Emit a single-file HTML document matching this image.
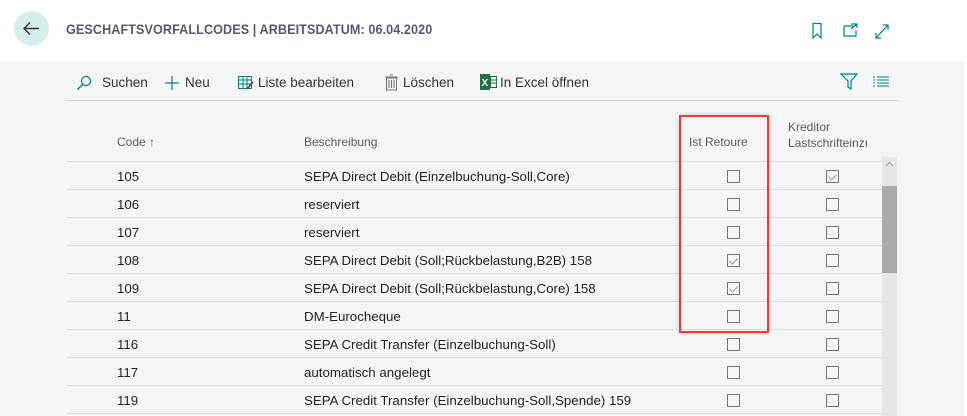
<!DOCTYPE html>
<html><head><meta charset="utf-8"><style>
body{margin:0;width:967px;height:416px;overflow:hidden;background:#fff;font-family:"Liberation Sans",sans-serif;position:relative}
.a{position:absolute}
.gray{left:0;top:61px;width:966px;height:355px;background:#f4f5f7}
.title{left:66px;top:21px;font-size:14px;font-weight:bold;color:#505c6d;letter-spacing:0.1px;transform:scaleX(0.9);transform-origin:left}
.tb{top:75px;font-size:13.5px;color:#333}
.hdr{font-size:12px;color:#5a5a5a}
.row{left:66px;width:816px;height:27px;border-bottom:1px solid #dcdcdc}
.cell{font-size:13.3px;color:#222;top:7px}
.cb{width:11px;height:11px;border:1px solid #777;background:#f4f5f7}
.cb.c::after{content:"";position:absolute;left:3px;top:1px;width:4px;height:7px;border:solid #999;border-width:0 1px 1px 0;transform:rotate(45deg)}
</style></head><body>
<div class="a gray"></div>
<div class="a" style="left:14px;top:11px;width:35px;height:35px;border-radius:50%;background:#d6eef0"></div>
<svg class="a" style="left:21px;top:18px" width="21" height="21"><path d="M3 10.5H18M9 4.5L3 10.5L9 16.5" stroke="#333" stroke-width="1.4" fill="none"/></svg>
<div class="a title">GESCHAFTSVORFALLCODES | ARBEITSDATUM: 06.04.2020</div>
<svg class="a" style="left:810px;top:22px" width="80" height="18"><path d="M3 1.5H11V16L7 12L3 16Z" fill="none" stroke="#00838a" stroke-width="1.2"/><path d="M43 4H34V14H46V8M41 2H47V6M47 2L41 7" fill="none" stroke="#00838a" stroke-width="1.2"/><path d="M66 16L78 3M66 11V16H71M73 3H78V8" fill="none" stroke="#00838a" stroke-width="1.2"/></svg>
<svg class="a" style="left:76px;top:75px" width="16" height="16"><circle cx="10" cy="6" r="4.5" fill="none" stroke="#00838a" stroke-width="1.3"/><path d="M7 9L1.5 14.5" stroke="#00838a" stroke-width="1.4"/></svg>
<div class="a tb" style="left:102px">Suchen</div>
<svg class="a" style="left:164px;top:75px" width="16" height="16"><path d="M8 1V15M1 8H15" stroke="#00838a" stroke-width="1.2"/></svg>
<div class="a tb" style="left:185px">Neu</div>
<svg class="a" style="left:238px;top:76px" width="16" height="14"><rect x="0.5" y="0.5" width="13" height="12" fill="none" stroke="#00838a"/><path d="M0 4H14M0 8H14M5 0V13M9 0V13" stroke="#00838a"/><path d="M9 13L15 6" stroke="#444" stroke-width="1.5"/></svg>
<div class="a tb" style="left:258px">Liste bearbeiten</div>
<svg class="a" style="left:385px;top:74px" width="13" height="17"><rect x="1.5" y="4" width="10" height="12" fill="#eee" stroke="#777"/><path d="M0 3H13M5 1H8M4 6V14M6.5 6V14M9 6V14" stroke="#777"/></svg>
<div class="a tb" style="left:403px">Löschen</div>
<svg class="a" style="left:480px;top:74px" width="17" height="16"><rect x="0" y="0" width="10" height="16" fill="#1e7145"/><text x="1.5" y="12" font-size="10" font-weight="bold" fill="#fff" font-family="Liberation Sans">X</text><rect x="10.5" y="2.5" width="6" height="11" fill="none" stroke="#1e7145"/><path d="M11 6H16M11 9H16" stroke="#1e7145"/></svg>
<div class="a tb" style="left:500px">In Excel öffnen</div>
<svg class="a" style="left:840px;top:73px" width="18" height="17"><path d="M1 1H17L11 8V16L8 14V8Z" fill="none" stroke="#00838a" stroke-width="1.2"/></svg>
<svg class="a" style="left:873px;top:76px" width="16" height="12"><path d="M0 1H2M4 1H16M0 4H2M4 4H16M0 7H2M4 7H16M0 10H2M4 10H16" stroke="#00838a" stroke-width="1.1"/></svg>
<div class="a" style="left:66px;top:100px;width:832px;height:1px;background:#d6d8dc"></div>
<div class="a hdr" style="left:117px;top:135px">Code ↑</div>
<div class="a hdr" style="left:304px;top:135px">Beschreibung</div>
<div class="a hdr" style="left:689px;top:135px">Ist Retoure</div>
<div class="a hdr" style="left:788px;top:119px;line-height:16px">Kreditor<br>Lastschrifteinzı</div>
<div class="a" style="left:66px;top:161px;width:816px;height:1px;background:#dcdcdc"></div>
<div id="rows"></div>
<div class="a" style="left:882px;top:157px;width:15px;height:259px;background:#e6e6e6"></div>
<div class="a" style="left:882px;top:186px;width:15px;height:87px;background:#ababab"></div>
<svg class="a" style="left:885px;top:161px" width="9" height="6"><path d="M1 5L4.5 1.5L8 5" stroke="#999" fill="none"/></svg>
<div class="a" style="left:679px;top:115px;width:86px;height:214px;border:2px solid #ee3a3f;box-shadow:0 0 4px rgba(0,0,0,0.2)"></div>
<div class="a" style="left:965px;top:0;width:2px;height:416px;background:#fff"></div>
<script>
var d=[["105","SEPA Direct Debit (Einzelbuchung-Soll,Core)",0,1],["106","reserviert",0,0],["107","reserviert",0,0],["108","SEPA Direct Debit (Soll;Rückbelastung,B2B) 158",1,0],["109","SEPA Direct Debit (Soll;Rückbelastung,Core) 158",1,0],["11","DM-Eurocheque",0,0],["116","SEPA Credit Transfer (Einzelbuchung-Soll)",0,0],["117","automatisch angelegt",0,0],["119","SEPA Credit Transfer (Einzelbuchung-Soll,Spende) 159",0,0]];
var h="";d.forEach(function(r,i){var t=162+i*28;h+='<div class="a row" style="top:'+t+'px"><div class="a cell" style="left:51px">'+r[0]+'</div><div class="a cell" style="left:238px">'+r[1]+'</div><div class="a cb'+(r[2]?' c':'')+'" style="left:661px;top:8px"></div><div class="a cb'+(r[3]?' c':'')+'" style="left:760px;top:8px"></div></div>';});
document.getElementById("rows").innerHTML=h;
</script>
</body></html>
